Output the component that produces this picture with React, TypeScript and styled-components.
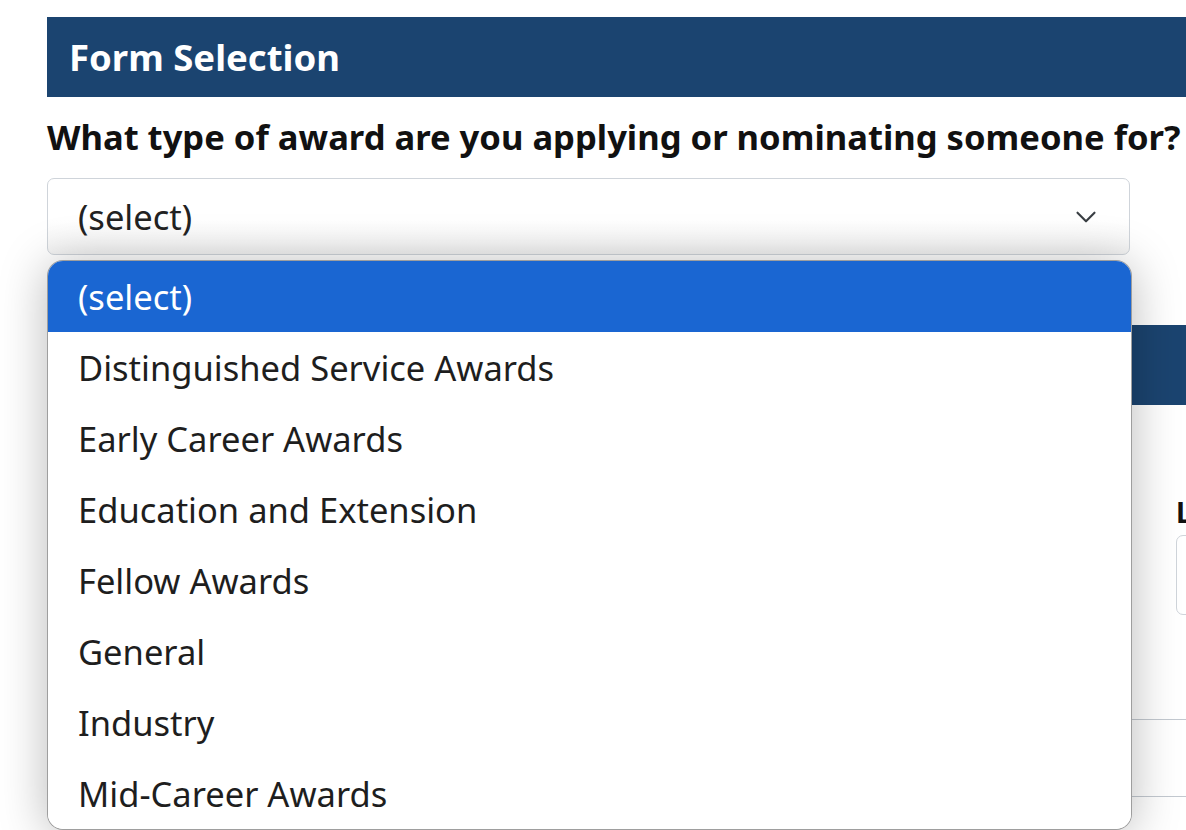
import styled, { createGlobalStyle } from 'styled-components';
import { ChevronDown } from 'lucide-react';

const GlobalStyle = createGlobalStyle`
    html, body {
        margin: 0;
        padding: 0;
        background: #ffffff;
    }

    body {
        font-family: "Noto Sans", "Open Sans", Arial, sans-serif;
        color: #212529;
    }
`;

const awardTypes = [
    '(select)',
    'Distinguished Service Awards',
    'Early Career Awards',
    'Education and Extension',
    'Fellow Awards',
    'General',
    'Industry',
    'Mid-Career Awards',
];

const App = () => {
    return (
        <>
            <GlobalStyle />
            <Page>
                <SectionHeader>Form Selection</SectionHeader>
                <QuestionLabel>What type of award are you applying or nominating someone for?</QuestionLabel>

                <SelectWrapper>
                    <SelectBox>
                        <span>(select)</span>
                        <ChevronDown size={34} strokeWidth={1.5} color="#3a3f44" />
                    </SelectBox>

                    {/* open native-style option list, drawn over the form below */}
                    <OptionList>
                        {awardTypes.map((award, i) => (
                            <OptionItem key={award} selected={i === 0}>{award}</OptionItem>
                        ))}
                    </OptionList>
                </SelectWrapper>

                <SectionHeader spaced>Nominee Information</SectionHeader>

                <FieldGrid>
                    <Field>
                        <FieldLabel>First Name</FieldLabel>
                        <FieldInput />
                    </Field>
                    <Field>
                        <FieldLabel>Last Name</FieldLabel>
                        <FieldInput />
                    </Field>
                </FieldGrid>

                <Rule first />
                <Rule />
            </Page>
        </>
    );
}

const Page = styled.div`
    height: 830px;
    padding: 17px 0 0 47px;
    box-sizing: border-box;
    width: 1300px;
    overflow: hidden;
`;

const SectionHeader = styled.div<{ spaced?: boolean }>`
    height: 80px;
    margin-top: ${props => props.spaced ? '70px' : '0'};
    padding-left: 22px;

    display: flex;
    align-items: center;

    background-color: #1b4470;
    color: #ffffff;
    font-size: 36.5px;
    font-weight: 700;
`;

const QuestionLabel = styled.div`
    height: 44px;
    margin: 18px 0 19px;

    font-size: 34.6px;
    line-height: 44px;
    font-weight: 700;
    color: #111;
    white-space: nowrap;
`;

const SelectWrapper = styled.div`
    position: relative;
    width: 1083px;
`;

const SelectBox = styled.div`
    height: 77px;
    padding: 0 26px 0 30px;
    box-sizing: border-box;

    display: flex;
    align-items: center;
    justify-content: space-between;

    border: 1px solid #cfd4da;
    border-radius: 7px;
    background: linear-gradient(#ffffff 55%, #f3f3f3);

    font-size: 34.5px;
    color: #222;
`;

const OptionList = styled.ul`
    list-style: none;
    margin: 0;
    padding: 0;

    position: absolute;
    top: 82px;
    left: 0;
    width: 100%;
    z-index: 10;

    background: #ffffff;
    border: 1px solid rgba(0, 0, 0, 0.38);
    border-radius: 16px;
    overflow: hidden;
    box-shadow: 0 4px 48px rgba(0, 0, 0, 0.28);
`;

const OptionItem = styled.li<{ selected?: boolean }>`
    height: 71px;
    padding-left: 30px;

    display: flex;
    align-items: center;

    font-size: 34.5px;
    background-color: ${props => props.selected ? '#1a66d2' : '#ffffff'};
    color: ${props => props.selected ? '#ffffff' : '#1e1e1e'};
`;

const FieldGrid = styled.div`
    margin-top: 90px;

    display: grid;
    grid-template-columns: 1083px 1fr;
    gap: 46px;
`;

const Field = styled.div`
    display: flex;
    flex-direction: column;
    gap: 6px;
`;

const FieldLabel = styled.label`
    font-size: 28px;
    line-height: 34px;
    font-weight: 700;
    color: #111;
    white-space: nowrap;
`;

const FieldInput = styled.div`
    height: 78px;
    border: 1px solid #cfd4da;
    border-radius: 7px;
    background: #ffffff;
`;

const Rule = styled.div<{ first?: boolean }>`
    height: ${props => props.first ? '104px' : '76px'};
    border-bottom: 1px solid #c3c9d0;
`;

export default App;
